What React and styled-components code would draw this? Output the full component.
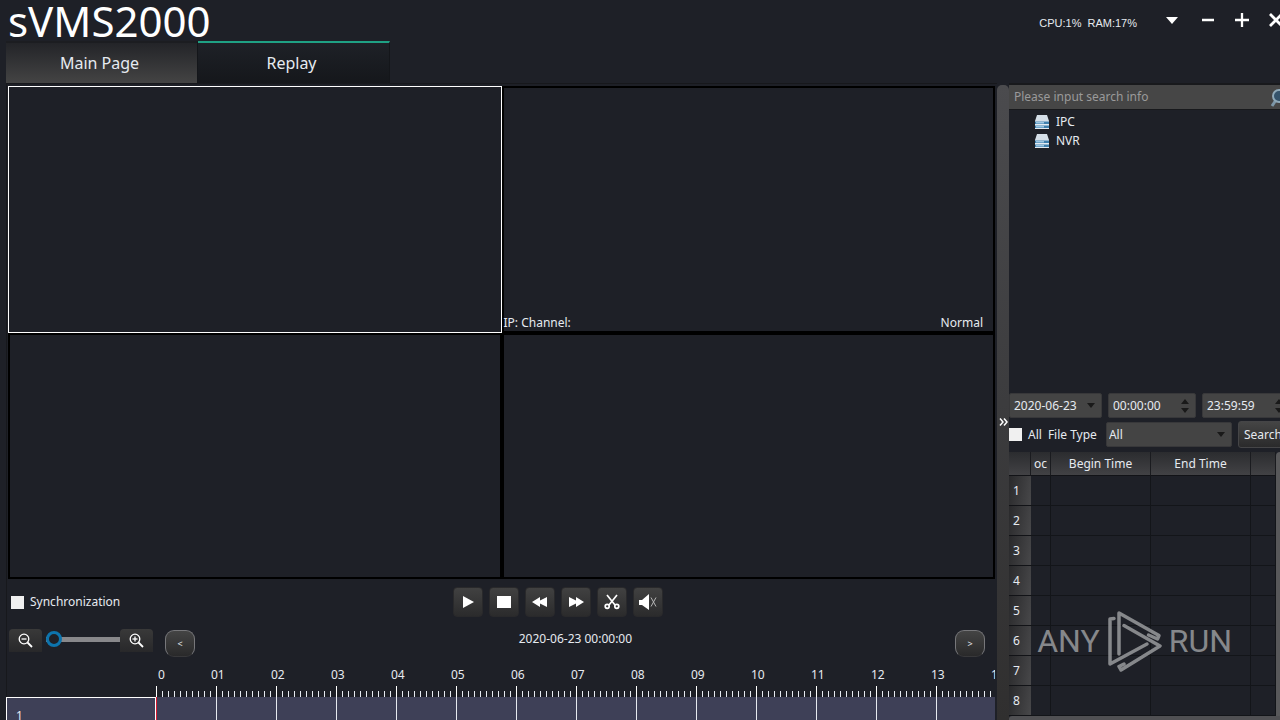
import React, { useState } from 'react'
import styled, { createGlobalStyle } from 'styled-components'

const GlobalStyle = createGlobalStyle`
  * {
    box-sizing: border-box;
  }
  body {
    margin: 0;
    overflow: hidden;
    background: #1e2027;
    color: #e6eaf0;
    font: 12px/16px 'Noto Sans', 'Open Sans', sans-serif;
  }
  button,
  input,
  select {
    margin: 0;
    padding: 0;
    border: 0;
    font: inherit;
    color: inherit;
  }
`

const Window = styled.div`
  display: flex;
  flex-direction: column;
  height: 100vh;
  overflow: hidden;
`

const Header = styled.header`
  display: flex;
  justify-content: space-between;
  height: 41px;
  padding-left: 8px;
`
const Title = styled.h1`
  margin: 0;
  font-size: 42px;
  line-height: 41px;
  font-weight: 400;
  color: #fff;
`
const HeaderRight = styled.div`
  display: flex;
  align-items: center;
  height: 40px;
  margin-right: -13px;
`
const Usage = styled.div`
  display: flex;
  gap: 6px;
  margin-right: 16px;
  padding-top: 6px;
  font: 11px/16px 'Liberation Sans', sans-serif;
`
const WindowButton = styled.button`
  display: flex;
  align-items: center;
  justify-content: center;
  width: ${props => (props.$wide ? '38px' : '34px')};
  height: 34px;
  background: none;
  color: #fff;
`

const Tabs = styled.nav`
  display: flex;
  height: 42px;
  padding-left: 6px;
`
const Tab = styled.button`
  width: 192px;
  height: 42px;
  border-top: 2px solid ${props => (props.$active ? '#1fa184' : '#1c1d21')};
  border-right: 1px solid #14161a;
  background: ${props =>
    props.$active
      ? 'linear-gradient(#1e2127, #15171b)'
      : 'linear-gradient(#232428, #444)'};
  font-size: 16px;
  line-height: 22px;
  padding-right: 4px;
`

const Body = styled.div`
  display: flex;
  flex: 1;
  min-height: 0;
  padding-left: 6px;
`
const Player = styled.main`
  display: flex;
  flex-direction: column;
  flex: 1;
  min-width: 0;
  padding-right: 2px;
  border-top: 1px solid #17181c;
  border-left: 1px solid #17181c;
`
const Screens = styled.div`
  display: grid;
  grid-template-columns: 1fr 1fr;
  grid-template-rows: 1fr 1fr;
  flex: 1;
  margin: 2px 0 0 1px;
`
const Screen = styled.section`
  display: flex;
  align-items: flex-end;
  justify-content: space-between;
  border: ${props => (props.$selected ? '1px solid #fff' : '2px solid #000')};
  padding-right: 10px;
  background: #1e2027;
`

const PlayRow = styled.div`
  display: grid;
  grid-template-columns: 4fr auto 3fr;
  align-items: center;
  height: 46px;
  padding-left: 4px;
`
const CheckLabel = styled.label`
  display: flex;
  flex: none;
  align-items: center;
  gap: 6px;
`
const Checkbox = styled.input.attrs({ type: 'checkbox' })`
  appearance: none;
  width: 13px;
  height: 13px;
  background: #f0f0f0;
  &:checked {
    background: #0d74ad;
  }
`
const PlayButtons = styled.div`
  display: flex;
  gap: 6px;
`
const PlayButton = styled.button`
  display: flex;
  align-items: center;
  justify-content: center;
  width: 30px;
  height: 30px;
  border: 1px solid #29292b;
  border-radius: 4px;
  background: linear-gradient(#414141, #2b2b2c);
  color: #fff;
`

const TimeRow = styled.div`
  display: grid;
  grid-template-columns: 13fr auto 9fr;
  align-items: start;
  height: 42px;
  padding: 4px 10px 0 2px;
`
const ZoomGroup = styled.div`
  display: flex;
  align-items: flex-start;
`
const ZoomButton = styled.button`
  display: flex;
  align-items: center;
  justify-content: center;
  width: 33px;
  height: 23px;
  border-radius: 4px 4px 0 0;
  background: linear-gradient(#393939, #28282a);
  color: #fff;
`
const ZoomSlider = styled.input.attrs({ type: 'range' })`
  appearance: none;
  width: 74px;
  height: 21px;
  margin-left: 4px;
  background: none;
  &::-webkit-slider-runnable-track {
    height: 5px;
    background: #88888b;
  }
  &::-webkit-slider-thumb {
    appearance: none;
    width: 16px;
    height: 16px;
    margin-top: -6px;
    border: 3px solid #0d74ad;
    border-radius: 50%;
    background: #1e2027;
  }
`
const StepButton = styled.button`
  width: 30px;
  height: 27px;
  margin-top: 1px;
  margin-left: ${props => (props.$next ? 'auto' : '12px')};
  border: 1px solid #77777a;
  border-bottom-color: #38383a;
  border-radius: 9px;
  background: linear-gradient(#444, #29292a);
  font-size: 9px;
  line-height: 24px;
`
const Timestamp = styled.time`
  line-height: 19px;
`

const Timeline = styled.div`
  display: flex;
  height: 53px;
  margin-left: -1px;
  overflow: hidden;
`
const Channels = styled.div`
  display: flex;
  flex-direction: column;
  flex: 0 0 150px;
  justify-content: flex-end;
`
const Channel = styled.div`
  height: 23px;
  padding: 10px 9px 0;
  border: 1px solid #fff;
  border-bottom: 0;
  background: #3e4057;
`
const Ruler = styled.div`
  flex: 1;
  min-width: 0;
  overflow: hidden;
`
const Hours = styled.div`
  display: flex;
  height: 19px;
  padding-left: 2px;
`
const Hour = styled.span`
  flex: none;
  width: ${props => (props.$first ? '53px' : '60px')};
`
const Ticks = styled.div`
  height: 11px;
  background: repeating-linear-gradient(90deg, #fff 0 1px, transparent 1px 60px)
      0 0 / 100% 11px no-repeat,
    repeating-linear-gradient(90deg, #e6eaf0 0 1px, transparent 1px 6px) 0
      100% / 100% 6px no-repeat;
`
const Lane = styled.div`
  height: 23px;
  border-left: 1px solid #d51c33;
  background: repeating-linear-gradient(
    90deg,
    #3e4057 0 59px,
    #e6eaf0 59px 60px
  );
`

const Splitter = styled.button`
  display: flex;
  align-items: center;
  justify-content: center;
  flex: 0 0 12px;
  margin-top: 2px;
  padding-top: 38px;
  border-radius: 5px 5px 0 0;
  background: linear-gradient(#4b4b4e, #3c3c3e 50%, #302f2f);
  color: #fff;
`

const Sidebar = styled.aside`
  flex: 0 0 271px;
  min-width: 0;
  overflow: hidden;
`
const SidebarInner = styled.div`
  display: flex;
  flex-direction: column;
  width: 290px;
  height: 100%;
`
const SearchBox = styled.div`
  display: flex;
  align-items: center;
  width: 281px;
  height: 27px;
  padding: 0 3px 0 5px;
  border-top: 2px solid #18191c;
  border-bottom: 1px solid #18191c;
  background: #464646;
`
const SearchInput = styled.input`
  flex: 1;
  min-width: 0;
  background: none;
  outline: none;
  &::placeholder {
    color: #9a9a9a;
  }
`
const Tree = styled.ul`
  flex: 1;
  margin: 0;
  padding: 2px 0 0 25px;
  list-style: none;
`
const TreeItem = styled.li`
  display: flex;
  align-items: center;
  gap: 6px;
  height: 19px;
`
const FilterRow = styled.div`
  display: flex;
  align-items: center;
  gap: 6px;
  height: 29px;
  padding-bottom: 4px;
`
const TypeLabel = styled.label`
  flex: 0 0 52px;
  white-space: nowrap;
`
const Field = styled.div`
  display: grid;
  grid-template-columns: 1fr auto;
  align-items: center;
  flex: 0 0 ${props => props.$width}px;
  height: 25px;
  border: 1px solid #38383a;
  border-radius: 2px;
  background: #444;
  > svg {
    grid-area: 1 / 2;
    margin-right: 5px;
    pointer-events: none;
  }
`
const Select = styled.select`
  grid-area: 1 / 1 / 2 / 3;
  appearance: none;
  width: 100%;
  height: 23px;
  padding-left: ${props => props.$indent || 4}px;
  background: none;
  outline: none;
`
const TimeInput = styled.input`
  grid-area: 1 / 1 / 2 / 3;
  width: 100%;
  height: 23px;
  padding-left: 4px;
  background: none;
  outline: none;
`
const SearchButton = styled.button`
  flex: 0 0 50px;
  height: 27px;
  border: 1px solid #454547;
  border-radius: 3px;
  background: linear-gradient(#454545, #2a2a2b);
`

const Results = styled.div`
  display: flex;
  height: 264px;
  margin-top: 1px;
`
const Table = styled.table`
  flex: none;
  width: 267px;
  table-layout: fixed;
  border-collapse: separate;
  border-spacing: 0;
`
const HeadCell = styled.th`
  width: ${props => (props.$width ? props.$width + 'px' : 'auto')};
  height: 24px;
  padding: 0;
  overflow: hidden;
  border-right: 1px solid #1a1b1f;
  border-bottom: 1px solid #121317;
  background: linear-gradient(#2b2c2f, #424245);
  font-weight: 400;
`
const RowHead = styled.th`
  height: 30px;
  padding: 0 4px;
  border-bottom: 1px solid #121317;
  background: linear-gradient(100deg, #29292b, #48484a);
  font-weight: 400;
  text-align: left;
`
const Cell = styled.td`
  padding: 0;
  border-right: 1px solid #131519;
  border-bottom: 1px solid #131519;
`
const ScrollBar = styled.div`
  flex: 1;
  border-radius: 4px 0 0 0;
  background: #58585a;
`
const BottomScroll = styled.div`
  height: 4px;
  border-radius: 3px 3px 0 0;
  background: #505053;
`

const Watermark = styled.div`
  position: absolute;
  right: 48px;
  bottom: 48px;
  display: flex;
  align-items: center;
  gap: 7px;
  color: #a1a2a5;
  opacity: 0.8;
  font: 32px/62px Roboto, 'Liberation Sans', sans-serif;
  pointer-events: none;
`

const DownArrow = () => (
  <svg width="10" height="6" viewBox="0 0 10 6">
    <path d="M1 0h8L5 5z" fill="#191919" />
  </svg>
)

const SpinArrows = () => (
  <svg width="10" height="14" viewBox="0 0 10 14">
    <path d="M1 5h8L5 0zM1 9h8L5 14z" fill="#191919" />
  </svg>
)

const DeviceIcon = () => (
  <svg width="16" height="16" viewBox="0 0 16 16">
    <path d="M3 1h10l2 6H1z" fill="#d5dfe8" />
    <path d="M1 7h14v8H1z" fill="#e3ebf2" />
    <path d="M1 7.500h14v2.500H1zM1 11.500h14v2.500H1z" fill="#3f7fac" />
    <path d="M2 8h8v1.500H2zM2 12h8v1.500H2z" fill="#9cc6e2" />
  </svg>
)

const ZoomIcon = ({ plus }) => (
  <svg
    width="15"
    height="15"
    viewBox="0 0 15 15"
    fill="none"
    stroke="currentColor"
    strokeWidth="1.300"
  >
    <circle cx="6" cy="6" r="4.800" />
    <path d="M3.500 6h5" />
    {plus && <path d="M6 3.500v5" />}
    <path d="M9.500 9.500l4.500 4.500" strokeWidth="1.800" />
  </svg>
)

const playIcons = {
  Play: <path d="M5 4l11 6-11 6z" fill="currentColor" />,
  Stop: <path d="M3 4h14v12H3z" fill="currentColor" />,
  Rewind: (
    <path d="M2 10l8-5v3.500l7-3.500v10l-7-3.500v3.500z" fill="currentColor" />
  ),
  Forward: (
    <path d="M18 10l-8-5v3.500L3 5v10l7-3.500v3.500z" fill="currentColor" />
  ),
  Cut: (
    <g fill="none" stroke="currentColor" strokeWidth="1.700">
      <path d="M5 3l8 10M15 3L7 13" />
      <circle cx="5.200" cy="14.300" r="2" />
      <circle cx="14.800" cy="14.300" r="2" />
    </g>
  ),
  Mute: (
    <g>
      <path d="M1 8h3l7-6v16l-7-5H1z" fill="currentColor" />
      <path d="M13 5.500l5 9M18 5.500l-5 9" stroke="#b5b5b5" />
    </g>
  )
}

const hours = Array.from({ length: 24 }, (_, i) =>
  i === 0 ? '0' : String(i).padStart(2, '0')
)
const rows = [1, 2, 3, 4, 5, 6, 7, 8]

const TimeField = ({ label, initial }) => {
  const [value, setValue] = useState(initial)
  return (
    <Field $width={88}>
      <TimeInput
        aria-label={label}
        value={value}
        onChange={e => setValue(e.target.value)}
      />
      <SpinArrows />
    </Field>
  )
}

const TopBar = () => (
  <Header>
    <Title>sVMS2000</Title>
    <HeaderRight>
      <Usage>
        <span>CPU:1%</span>
        <span>RAM:17%</span>
      </Usage>
      <WindowButton $wide aria-label="Menu">
        <svg width="12" height="7" viewBox="0 0 12 7">
          <path d="M0 0h12L6 7z" fill="currentColor" />
        </svg>
      </WindowButton>
      <WindowButton aria-label="Minimize">
        <svg width="14" height="14" viewBox="0 0 14 14">
          <path d="M1 7h12" stroke="currentColor" strokeWidth="2.500" />
        </svg>
      </WindowButton>
      <WindowButton aria-label="Maximize">
        <svg width="14" height="14" viewBox="0 0 14 14">
          <path d="M0 7h14M7 0v14" stroke="currentColor" strokeWidth="2.300" />
        </svg>
      </WindowButton>
      <WindowButton aria-label="Close">
        <svg width="14" height="14" viewBox="0 0 14 14">
          <path
            d="M1 1l12 12M13 1L1 13"
            stroke="currentColor"
            strokeWidth="2.800"
          />
        </svg>
      </WindowButton>
    </HeaderRight>
  </Header>
)

const PlayerPanel = () => {
  const [zoom, setZoom] = useState(0)
  return (
    <Player>
      <Screens>
        <Screen $selected />
        <Screen>
          <span>IP: Channel:</span>
          <span>Normal</span>
        </Screen>
        <Screen />
        <Screen />
      </Screens>
      <PlayRow>
        <CheckLabel>
          <Checkbox />
          Synchronization
        </CheckLabel>
        <PlayButtons>
          {Object.keys(playIcons).map(name => (
            <PlayButton key={name} aria-label={name}>
              <svg width="20" height="20" viewBox="0 0 20 20">
                {playIcons[name]}
              </svg>
            </PlayButton>
          ))}
        </PlayButtons>
      </PlayRow>
      <TimeRow>
        <ZoomGroup>
          <ZoomButton aria-label="Zoom out">
            <ZoomIcon />
          </ZoomButton>
          <ZoomSlider
            aria-label="Zoom"
            value={zoom}
            onChange={e => setZoom(e.target.value)}
          />
          <ZoomButton aria-label="Zoom in">
            <ZoomIcon plus />
          </ZoomButton>
          <StepButton>&lt;</StepButton>
        </ZoomGroup>
        <Timestamp>2020-06-23 00:00:00</Timestamp>
        <StepButton $next>&gt;</StepButton>
      </TimeRow>
      <Timeline>
        <Channels>
          <Channel>1</Channel>
        </Channels>
        <Ruler>
          <Hours>
            {hours.map((hour, i) => (
              <Hour key={hour} $first={i === 0}>
                {hour}
              </Hour>
            ))}
          </Hours>
          <Ticks />
          <Lane />
        </Ruler>
      </Timeline>
    </Player>
  )
}

const SidePanel = () => (
  <Sidebar>
    <SidebarInner>
      <SearchBox>
        <SearchInput
          aria-label="Search devices"
          placeholder="Please input search info"
        />
        <svg width="17" height="19" viewBox="0 0 17 19" fill="none">
          <path d="M6 12l-4 6" stroke="#7d97a8" strokeWidth="3" />
          <circle
            cx="9"
            cy="8"
            r="6"
            fill="#35536b"
            stroke="#8fa9b9"
            strokeWidth="2"
          />
        </svg>
      </SearchBox>
      <Tree>
        <TreeItem>
          <DeviceIcon />
          IPC
        </TreeItem>
        <TreeItem>
          <DeviceIcon />
          NVR
        </TreeItem>
      </Tree>
      <FilterRow>
        <Field $width={93}>
          <Select aria-label="Date">
            <option>2020-06-23</option>
          </Select>
          <DownArrow />
        </Field>
        <TimeField label="Begin time" initial="00:00:00" />
        <TimeField label="End time" initial="23:59:59" />
      </FilterRow>
      <FilterRow>
        <CheckLabel>
          <Checkbox />
          All
        </CheckLabel>
        <TypeLabel htmlFor="fileType">File Type</TypeLabel>
        <Field $width={126}>
          <Select id="fileType" $indent={2}>
            <option>All</option>
          </Select>
          <DownArrow />
        </Field>
        <SearchButton>Search</SearchButton>
      </FilterRow>
      <Results>
        <Table>
          <thead>
            <tr>
              <HeadCell $width={22} />
              <HeadCell $width={20}>oc</HeadCell>
              <HeadCell $width={100}>Begin Time</HeadCell>
              <HeadCell $width={100}>End Time</HeadCell>
              <HeadCell />
            </tr>
          </thead>
          <tbody>
            {rows.map(row => (
              <tr key={row}>
                <RowHead>{row}</RowHead>
                <Cell />
                <Cell />
                <Cell />
                <Cell />
              </tr>
            ))}
          </tbody>
        </Table>
        <ScrollBar />
      </Results>
      <BottomScroll />
    </SidebarInner>
  </Sidebar>
)

const App = () => (
  <>
    <GlobalStyle />
    <Window>
      <TopBar />
      <Tabs>
        <Tab>Main Page</Tab>
        <Tab $active>Replay</Tab>
      </Tabs>
      <Body>
        <PlayerPanel />
        <Splitter aria-label="Collapse panel">
          <svg
            width="9"
            height="8"
            viewBox="0 0 9 8"
            fill="none"
            stroke="currentColor"
            strokeWidth="1.500"
          >
            <path d="M1 0.500L4 4 1 7.500M5 0.500L8 4 5 7.500" />
          </svg>
        </Splitter>
        <SidePanel />
      </Body>
      <Watermark>
        <span>ANY</span>
        <svg
          width="55"
          height="62"
          viewBox="0 0 55 62"
          fill="none"
          stroke="currentColor"
          strokeWidth="3.500"
          strokeLinecap="round"
          strokeLinejoin="round"
        >
          <path d="M7 8.500L3 9v45l37-20" />
          <path d="M12 44V3l40 22.500-1.500 3.500-9-4" />
          <path d="M17 15.500L53 36 14 60l-2-3.500 5-2.500" />
        </svg>
        <span>RUN</span>
      </Watermark>
    </Window>
  </>
)

export default App
